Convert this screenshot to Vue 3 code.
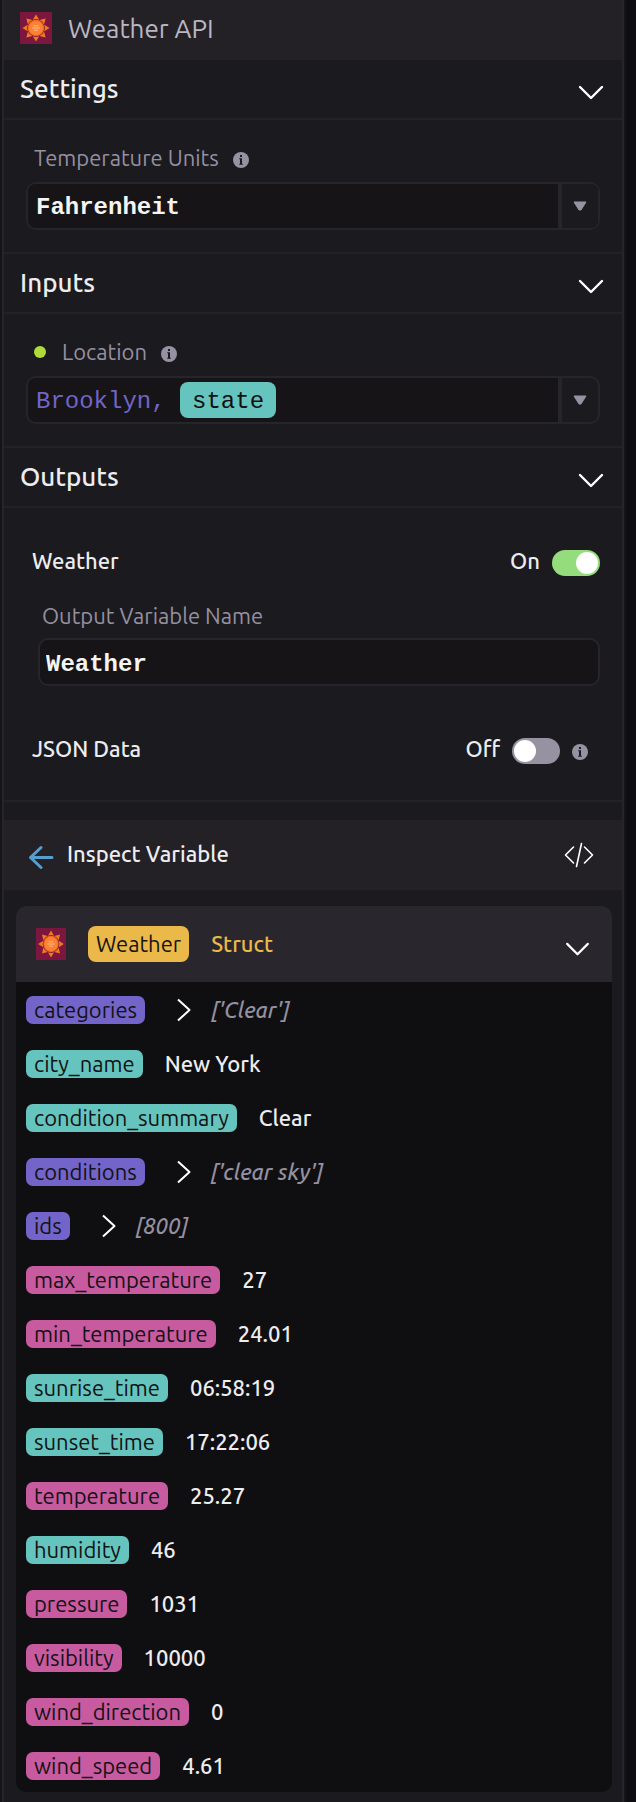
<script setup>
import { ref, h } from 'vue'

const units = ref('Fahrenheit')
const location = ref('Brooklyn, ')
const variableName = ref('Weather')
const weatherOn = ref(true)
const jsonOn = ref(false)
const open = ref({ settings: true, inputs: true, outputs: true, struct: true })

const fields = [
  { name: 'categories', kind: 'list', value: "['Clear']" },
  { name: 'city_name', kind: 'text', value: 'New York' },
  { name: 'condition_summary', kind: 'text', value: 'Clear' },
  { name: 'conditions', kind: 'list', value: "['clear sky']" },
  { name: 'ids', kind: 'list', value: '[800]' },
  { name: 'max_temperature', kind: 'number', value: '27' },
  { name: 'min_temperature', kind: 'number', value: '24.01' },
  { name: 'sunrise_time', kind: 'text', value: '06:58:19' },
  { name: 'sunset_time', kind: 'text', value: '17:22:06' },
  { name: 'temperature', kind: 'number', value: '25.27' },
  { name: 'humidity', kind: 'text', value: '46' },
  { name: 'pressure', kind: 'number', value: '1031' },
  { name: 'visibility', kind: 'number', value: '10000' },
  { name: 'wind_direction', kind: 'number', value: '0' },
  { name: 'wind_speed', kind: 'number', value: '4.61' }
]

const rays = [0, 45, 90, 135, 180, 225, 270, 315]

const SunIcon = () =>
  h('svg', { viewBox: '0 0 32 32', preserveAspectRatio: 'none', 'aria-hidden': 'true' }, [
    h('rect', { width: 32, height: 32, fill: '#7b173f' }),
    ...rays.map((a) =>
      h('path', { d: 'M16 2.4 L19.2 7.8 Q16 6.4 12.8 7.8 Z', fill: '#f47a22', transform: `rotate(${a} 16 16)` })
    ),
    h('circle', { cx: 16, cy: 16, r: 8.2, fill: '#f26a1e' }),
    h('circle', { cx: 16, cy: 16, r: 7, fill: '#fb8232' }),
    h('path', {
      d: 'M13.5 13.8h5M12 16h8M14 18.2h4',
      stroke: '#ffb98a',
      'stroke-width': 1,
      fill: 'none'
    })
  ])

const InfoIcon = () =>
  h('svg', { viewBox: '0 0 16 16', width: 16, height: 16, 'aria-hidden': 'true' }, [
    h('circle', { cx: 8, cy: 8, r: 8, fill: '#9792a2' }),
    h('path', { d: 'M7 3h2v2H7zM6.2 6.3H9v5.4h.8v1H6.2v-1H7V7.3h-.8z', fill: '#1b1a1f' })
  ])

const ChevronDown = () =>
  h('svg', { viewBox: '0 0 26 16', width: 26, height: 16, 'aria-hidden': 'true' }, [
    h('path', {
      d: 'M2 2 L13 13 L24 2',
      fill: 'none',
      stroke: '#fff',
      'stroke-width': 2.4,
      'stroke-linecap': 'round',
      'stroke-linejoin': 'round'
    })
  ])
</script>

<template>
  <main class="panel">
    <header class="title-bar">
      <SunIcon class="logo" />
      <h1>Weather API</h1>
    </header>

    <section>
      <button class="section-head" type="button" :aria-expanded="open.settings" @click="open.settings = !open.settings">
        <span>Settings</span><ChevronDown />
      </button>
      <div v-if="open.settings" class="section-body">
        <div class="label-row">
          <label for="units">Temperature Units</label><InfoIcon class="info" />
        </div>
        <div class="field">
          <select id="units" v-model="units" class="mono">
            <option>Fahrenheit</option>
            <option>Celsius</option>
          </select>
          <span class="drop">
            <svg viewBox="0 0 14 10" width="14" height="10" aria-hidden="true"><path d="M1 1H13L8 9H6Z" /></svg>
          </span>
        </div>
      </div>
    </section>

    <section>
      <button class="section-head" type="button" :aria-expanded="open.inputs" @click="open.inputs = !open.inputs">
        <span>Inputs</span><ChevronDown />
      </button>
      <div v-if="open.inputs" class="section-body">
        <div class="label-row">
          <span class="dot"></span><label for="location">Location</label><InfoIcon class="info" />
        </div>
        <div class="field">
          <div class="tokens">
            <input id="location" v-model="location" class="mono place" type="text" />
            <button class="mono token" type="button">state</button>
          </div>
          <button class="drop" type="button" aria-label="Choose a variable">
            <svg viewBox="0 0 14 10" width="14" height="10" aria-hidden="true"><path d="M1 1H13L8 9H6Z" /></svg>
          </button>
        </div>
      </div>
    </section>

    <section>
      <button class="section-head" type="button" :aria-expanded="open.outputs" @click="open.outputs = !open.outputs">
        <span>Outputs</span><ChevronDown />
      </button>
      <div v-if="open.outputs" class="outputs">
        <div class="switch-row">
          <label for="weather-on">Weather</label>
          <span class="state">{{ weatherOn ? 'On' : 'Off' }}</span>
          <input id="weather-on" v-model="weatherOn" class="switch" type="checkbox" role="switch" />
        </div>
        <div class="variable">
          <label for="variable-name">Output Variable Name</label>
          <input id="variable-name" v-model="variableName" class="mono" type="text" />
        </div>
        <div class="switch-row with-info">
          <label for="json-on">JSON Data</label>
          <span class="state">{{ jsonOn ? 'On' : 'Off' }}</span>
          <input id="json-on" v-model="jsonOn" class="switch" type="checkbox" role="switch" />
          <InfoIcon class="info" />
        </div>
      </div>
    </section>

    <section class="inspect">
      <header class="inspect-head">
        <button type="button" aria-label="Back">
          <svg viewBox="0 0 26 24" width="26" height="24" aria-hidden="true">
            <path d="M13 2.5 L2.5 12.5 L13 22.5 M2.5 12.5 H24" fill="none" stroke="#559fce" stroke-width="3" stroke-linecap="round" stroke-linejoin="round" />
          </svg>
        </button>
        <h2>Inspect Variable</h2>
        <button type="button" aria-label="View code">
          <svg viewBox="0 0 30 26" width="30" height="26" aria-hidden="true">
            <path d="M9.5 5 L1.5 13 L9.5 21 M20.5 5 L28.5 13 L20.5 21 M17.5 1.5 L12.5 24.5" fill="none" stroke="#fff" stroke-width="1.6" stroke-linecap="round" stroke-linejoin="round" />
          </svg>
        </button>
      </header>

      <article class="card">
        <header class="card-head">
          <SunIcon class="card-logo" />
          <span class="card-name">Weather</span>
          <span class="card-type">Struct</span>
          <button type="button" aria-label="Toggle Weather" :aria-expanded="open.struct" @click="open.struct = !open.struct">
            <ChevronDown class="small-chevron" />
          </button>
        </header>
        <ul v-if="open.struct" class="rows">
          <li v-for="f in fields" :key="f.name">
            <span class="tag" :class="f.kind">{{ f.name }}</span>
            <button v-if="f.kind === 'list'" class="expand" type="button" :aria-label="'Expand ' + f.name">
              <svg viewBox="0 0 16 24" width="16" height="24" aria-hidden="true">
                <path d="M2 1.5 L13.5 12 L2 22.5" fill="none" stroke="#fff" stroke-width="2" stroke-linejoin="round" />
              </svg>
            </button>
            <span class="value" :class="{ preview: f.kind === 'list' }">{{ f.value }}</span>
          </li>
        </ul>
      </article>
    </section>
  </main>
</template>

<style>
body {
  background: #0e0e10;
}
</style>

<style scoped>
.panel,
.panel * {
  box-sizing: border-box;
}
.panel {
  min-height: 100vh;
  margin: 0 12px 0 2px;
  padding-bottom: 10px;
  border: 2px solid #27252c;
  border-width: 0 2px;
  background: #1b1a1f;
  box-shadow: 2px 0 #151418, -2px 0 #151418;
  color: #ededf0;
  font-family: Ubuntu, "Noto Sans", sans-serif;
  font-size: 22px;
  line-height: 28px;
}
h1,
h2 {
  margin: 0;
  font-weight: 400;
}
button {
  margin: 0;
  padding: 0;
  border: 0;
  background: none;
  color: inherit;
  font: inherit;
  cursor: pointer;
}
input,
select {
  margin: 0;
  border: 0;
  outline: 0;
  appearance: none;
}
svg {
  display: block;
  flex: none;
}
.mono {
  font-family: "Liberation Mono", "Courier New", monospace;
  font-size: 24px;
  font-weight: 400;
  line-height: 28px;
}
.title-bar {
  display: flex;
  align-items: center;
  gap: 16px;
  height: 60px;
  padding: 0 16px 4px;
  background: #232126;
}
.logo {
  width: 32px;
  height: 32px;
}
h1 {
  padding-top: 2px;
  color: #bab7c2;
  font-size: 26px;
  line-height: 36px;
}
.section-head {
  display: flex;
  align-items: center;
  justify-content: space-between;
  width: 100%;
  height: 60px;
  padding: 0 18px 0 16px;
  border-bottom: 2px solid #222126;
  font-size: 26px;
  font-weight: 500;
}
.section-head svg {
  margin-top: 8px;
}
.section-body {
  padding: 24px 22px 22px;
  border-bottom: 2px solid #222126;
}
.label-row {
  display: flex;
  align-items: center;
  margin-bottom: 10px;
  padding-left: 8px;
  color: #9590a0;
}
.label-row .info {
  margin: 4px 0 0 14px;
}
.dot {
  width: 12px;
  height: 12px;
  margin-right: 16px;
  border-radius: 50%;
  background: #addc3a;
}
.field {
  display: flex;
  position: relative;
  height: 48px;
  border: 2px solid #27252c;
  border-radius: 10px;
  overflow: hidden;
}
.field select {
  flex: 1;
  min-width: 0;
  padding: 4px 48px 0 8px;
  background: #161416;
  color: #f4f4f2;
  font-weight: 700;
}
.drop {
  display: flex;
  align-items: center;
  justify-content: center;
  flex: none;
  width: 40px;
  border-left: 4px solid #27252c;
}
.drop svg {
  fill: #9792a2;
  stroke: #9792a2;
  stroke-linejoin: round;
}
.field select + .drop {
  position: absolute;
  top: 0;
  right: 0;
  bottom: 0;
  background: #1b1a1f;
  pointer-events: none;
}
.tokens {
  display: flex;
  align-items: center;
  flex: 1;
  min-width: 0;
  padding-left: 8px;
  background: #161416;
}
.place {
  width: 10ch;
  padding: 4px 0 0;
  background: none;
  color: #7264c8;
}
.token {
  height: 36px;
  padding: 4px 12px 0;
  border-radius: 8px;
  background: #66c4be;
  color: #101012;
}
.outputs {
  padding: 42px 22px 36px 28px;
  border-bottom: 2px solid #222126;
}
.switch-row {
  display: flex;
  align-items: center;
  height: 26px;
  font-weight: 500;
}
.switch-row label {
  flex: 1;
}
.switch-row label,
.state {
  padding-bottom: 4px;
}
.switch {
  width: 48px;
  height: 26px;
  margin-left: 12px;
  padding: 2px;
  border-radius: 13px;
  background: #9792a2;
  cursor: pointer;
}
.switch::before {
  content: "";
  display: block;
  width: 22px;
  height: 22px;
  border-radius: 50%;
  background: #fff;
}
.switch:checked {
  background: #95dd7c;
}
.switch:checked::before {
  margin-left: auto;
}
.with-info {
  padding-right: 12px;
}
.with-info .info {
  margin: 2px 0 0 12px;
}
.variable {
  display: flex;
  flex-direction: column;
  gap: 8px;
  margin: 26px 0 52px 6px;
}
.variable label {
  padding-left: 4px;
  color: #9590a0;
}
.variable input {
  width: 100%;
  height: 48px;
  padding: 4px 6px 0;
  border: 2px solid #27252c;
  border-radius: 10px;
  background: #161416;
  color: #f4f4f2;
  font-weight: 700;
}
.inspect {
  padding-top: 18px;
}
.inspect-head {
  display: flex;
  align-items: center;
  height: 70px;
  margin-bottom: 16px;
  padding: 0 28px 0 24px;
  background: #232126;
}
.inspect-head h2 {
  flex: 1;
  padding: 0 0 2px 13px;
  font-size: 22px;
  font-weight: 500;
}
.inspect-head button:first-child {
  padding-top: 4px;
}
.card {
  margin: 0 10px 0 12px;
  border-radius: 10px;
  background: #0f0f11;
  overflow: hidden;
}
.card-head {
  display: flex;
  align-items: center;
  height: 76px;
  padding: 0 22px 0 20px;
  background: #29272d;
}
.card-logo {
  width: 30px;
  height: 32px;
}
.card-name {
  margin: 0 22px;
  padding: 4px 8px;
  border-radius: 8px;
  background: #ebb84a;
  color: #161416;
}
.card-type {
  flex: 1;
  color: #ebb84a;
  font-weight: 500;
}
.small-chevron {
  width: 25px;
  height: 15px;
  margin-top: 10px;
}
.rows {
  display: flex;
  flex-direction: column;
  gap: 26px;
  margin: 0;
  padding: 14px 10px 12px;
  list-style: none;
}
.rows li {
  display: flex;
  align-items: center;
  height: 28px;
}
.tag {
  padding: 0 8px;
  border-radius: 7px;
  color: #121214;
}
.list {
  background: #7264c8;
}
.text {
  background: #66c4be;
}
.number {
  background: #c85aa0;
}
.expand {
  margin-left: 31px;
}
.value {
  margin-left: 22px;
  font-weight: 500;
}
.preview {
  margin-left: 19px;
  color: #9590a0;
  font-style: italic;
}
</style>
